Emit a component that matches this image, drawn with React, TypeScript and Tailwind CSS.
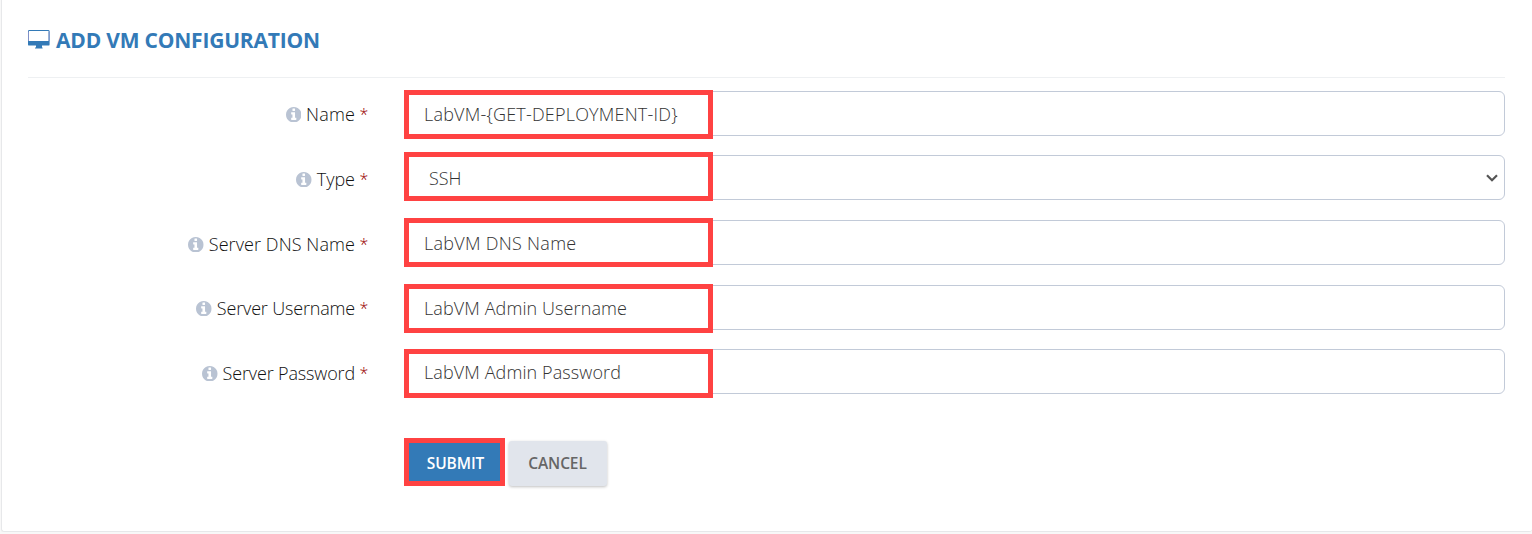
type Field = {
  label: string;
  value: string;
  select?: boolean;
  gap: string;
  mark: string;
  labelSpacing: string;
  valueSpacing: string;
  textShift: string;
};

const fields: Field[] = [
  { label: "Name", value: "LabVM-{GET-DEPLOYMENT-ID}", gap: "mt-[13px]", mark: "-top-px", labelSpacing: "tracking-[0.15px]", valueSpacing: "tracking-[0.2px]", textShift: "pt-px" },
  { label: "Type", value: "SSH", select: true, gap: "mt-[19px]", mark: "-top-[3px]", labelSpacing: "tracking-[0px]", valueSpacing: "tracking-[-0.1px]", textShift: "pt-[3px]" },
  { label: "Server DNS Name", value: "LabVM DNS Name", gap: "mt-[20px]", mark: "-top-[2px]", labelSpacing: "tracking-[0.08px]", valueSpacing: "tracking-[0.28px]", textShift: "pt-[3px]" },
  { label: "Server Username", value: "LabVM Admin Username", gap: "mt-[20px]", mark: "-top-px", labelSpacing: "tracking-[-0.17px]", valueSpacing: "tracking-[0.1px]", textShift: "pt-px" },
  { label: "Server Password", value: "LabVM Admin Password", gap: "mt-[19px]", mark: "top-0", labelSpacing: "tracking-[-0.15px]", valueSpacing: "tracking-[0.1px]", textShift: "pt-[3px]" },
];

function Monitor() {
  return (
    <svg width="22" height="19" viewBox="0 0 22 19" className="shrink-0" fill="#337ab7">
      <path fillRule="evenodd" d="M1.3 0H20.2Q21.6 0 21.6 1.3V14.4Q21.6 15.6 20.2 15.6H14V17.6H14.6V18.6H7V17.6H8V15.6H1.3Q0 15.6 0 14.4V1.3Q0 0 1.3 0ZM1 1V11H20.6V1Z" />
      <path d="M0.5 1.5V11M21.1 1.5V11" stroke="#7f8fc6" strokeWidth="1" />
    </svg>
  );
}

function Info() {
  return (
    <svg viewBox="128 128 1536 1536" className="mr-[5px] mt-px size-[15.5px] shrink-0" fill="#b9c3d3">
      <path d="M1152 1376v-160q0-14-9-23t-23-9h-96v-512q0-14-9-23t-23-9h-320q-14 0-23 9t-9 23v160q0 14 9 23t23 9h96v320h-96q-14 0-23 9t-9 23v160q0 14 9 23t23 9h448q14 0 23-9t9-23zm-128-896v-160q0-14-9-23t-23-9h-192q-14 0-23 9t-9 23v160q0 14 9 23t23 9h192q14 0 23-9t9-23zm640 416q0 209-103 385.500t-279.500 279.500-385.500 103-385.500-103-279.500-279.500-103-385.500 103-385.500 279.500-279.500 385.500-103 385.500 103 279.500 279.500 103 385.500z" />
    </svg>
  );
}

function Row({ field }: { field: Field }) {
  return (
    <div className={`flex h-[45px] ${field.gap}`}>
      <div className={`flex w-[340px] shrink-0 items-center justify-end leading-6 ${field.textShift}`}>
        <Info />
        <span className={`whitespace-nowrap text-[#111] ${field.labelSpacing}`}>{field.label}</span>
        <span className="ml-[4.5px] w-[8.5px] text-[16px] leading-6 text-[#990000]">*</span>
      </div>
      <div className="relative ml-[36px] flex flex-1 items-center rounded-[6px] border border-[#c2cad8]">
        <span className={`whitespace-nowrap pt-px leading-6 text-[#333] ${field.valueSpacing} ${field.select ? "pl-6" : "pl-[19px]"}`}>
          {field.value}
        </span>
        {field.select && (
          <svg width="12" height="8" viewBox="0 0 12 8" className="ml-auto mr-[6px]" fill="none" stroke="#555" strokeWidth="2.2">
            <path d="M1 1.2L6 6.2L11 1.2" />
          </svg>
        )}
        <div className={`absolute -left-px -mt-px h-[49px] w-[309px] border-[5px] border-[#ff4242] ${field.mark}`} />
      </div>
    </div>
  );
}

export default function App() {
  return (
    <div className="h-[534px] w-full overflow-hidden bg-[#f8f8f8] pl-px font-['Open_Sans','Noto_Sans',sans-serif] text-[18px] font-light">
      <div className="h-[532px] rounded-b-[3px] border-b border-l border-[#e7e8ea] bg-white pl-[26px] pr-[27px]">
        <h1 className="flex h-[78px] items-center border-b border-[#eef0f2] pt-px text-[21px] font-bold text-[#337ab7]">
          <Monitor />
          <span className="ml-[6px] whitespace-nowrap pt-[3px] tracking-[-0.2px]">ADD VM CONFIGURATION</span>
        </h1>
        <form>
          {fields.map((field) => (
            <Row key={field.label} field={field} />
          ))}
          <div className="ml-[376px] mt-[44px] flex gap-[4px] text-[15.5px] font-semibold">
            <button type="button" className="h-[48px] w-[101px] border-[5px] border-[#ff4242] bg-[#337ab7] pl-[2px] pt-[3px] tracking-[-0.1px] text-white">
              SUBMIT
            </button>
            <button type="button" className="mt-[3px] h-[45px] w-[98px] rounded-[3px] bg-[#e1e5ec] pr-px tracking-[-0.1px] text-[#666] shadow-[0_1px_3px_rgba(0,0,0,0.25)]">
              CANCEL
            </button>
          </div>
        </form>
      </div>
    </div>
  );
}
